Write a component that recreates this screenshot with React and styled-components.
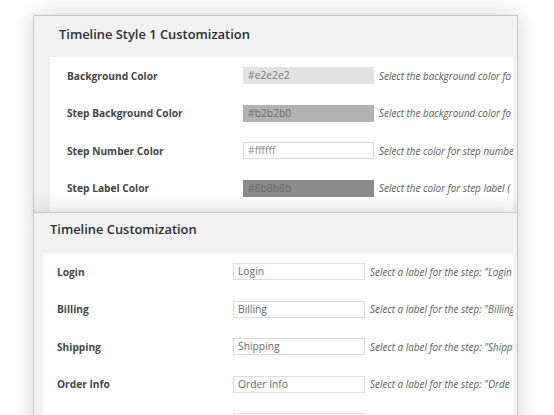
import React from 'react';
import styled, { createGlobalStyle } from 'styled-components';

const GlobalStyle = createGlobalStyle`
  html, body {
    margin: 0;
    padding: 0;
    background: #ffffff;
    overflow: hidden;
  }
  body {
    font-family: "Open Sans", "Liberation Sans", sans-serif;
  }
`;

const Page = styled.div`
  padding-top: 15px;
  height: 400px;
`;

const Panel = styled.section`
  margin-left: 33px;
  width: 483px;
  background: #f1f1f1;
  border: 1px solid #c9c9c9;
  border-bottom: ${(p) => (p.$open ? 'none' : '1px solid #c9c9c9')};
  box-shadow: 0 0 20px rgba(0, 0, 0, 0.18);
  position: relative;
`;

const Title = styled.h2`
  margin: 0;
  font-size: 12.9px;
  font-weight: 600;
  line-height: 16px;
  color: #2b2f33;
  padding: ${(p) => p.$top}px 0 ${(p) => p.$bottom}px ${(p) => p.$indent}px;
`;

const Sheet = styled.div`
  margin-left: ${(p) => p.$indent}px;
  margin-right: 4px;
  background: #ffffff;
  overflow: hidden;
  padding-bottom: ${(p) => p.$pad}px;
`;

const Row = styled.div`
  display: grid;
  grid-template-columns: ${(p) => p.$labelW}px ${(p) => p.$inputW}px 1fr;
  align-items: center;
  height: 37.5px;
  padding-left: ${(p) => p.$indent}px;
  column-gap: 5px;
`;

const Label = styled.div`
  font-size: 10.2px;
  font-weight: 700;
  color: #454545;
  white-space: nowrap;
`;

const Field = styled.div`
  height: 17px;
  box-sizing: border-box;
  border: 1px solid ${(p) => (p.$bg ? p.$bg : '#dcdcdc')};
  background: ${(p) => p.$bg || '#ffffff'};
  color: ${(p) => p.$ink || '#666'};
  font-size: 10.3px;
  line-height: 15px;
  padding-left: 4px;
  white-space: nowrap;
  overflow: hidden;
`;

const Hint = styled.div`
  font-size: 9.9px;
  font-style: italic;
  font-weight: 400;
  color: #5c5c5c;
  white-space: nowrap;
  overflow: hidden;
`;

const styleRows = [
  { label: 'Background Color', value: '#e2e2e2', bg: '#e2e2e2', ink: '#787878', hint: 'Select the background color fo' },
  { label: 'Step Background Color', value: '#b2b2b0', bg: '#b2b2b0', ink: '#6c6c6c', hint: 'Select the background color fo' },
  { label: 'Step Number Color', value: '#ffffff', bg: null, ink: '#8a8a8a', hint: 'Select the color for step numbe' },
  { label: 'Step Label Color', value: '#8b8b8b', bg: '#8b8b8b', ink: '#6a6a6a', hint: 'Select the color for step label (' },
];

const stepRows = [
  { label: 'Login', value: 'Login', hint: 'Select a label for the step: "Login' },
  { label: 'Billing', value: 'Billing', hint: 'Select a label for the step: "Billing' },
  { label: 'Shipping', value: 'Shipping', hint: 'Select a label for the step: "Shipp' },
  { label: 'Order Info', value: 'Order Info', hint: 'Select a label for the step: "Orde' },
  { label: '', value: '', hint: '' },
];

export default function App() {
  return (
    <Page>
      <GlobalStyle />
      <Panel $open>
        <Title $top={10} $bottom={15} $indent={25}>Timeline Style 1 Customization</Title>
        <Sheet $indent={16} $pad={5}>
          {styleRows.map((r) => (
            <Row key={r.label} $indent={17} $labelW={171} $inputW={131}>
              <Label>{r.label}</Label>
              <Field $bg={r.bg} $ink={r.ink}>{r.value}</Field>
              <Hint>{r.hint}</Hint>
            </Row>
          ))}
        </Sheet>
      </Panel>
      <Panel>
        <Title $top={8} $bottom={16} $indent={16}>Timeline Customization</Title>
        <Sheet $indent={9} $pad={0}>
          {stepRows.map((r, i) => (
            <Row key={i} $indent={14} $labelW={171} $inputW={132}>
              <Label>{r.label}</Label>
              <Field $ink="#6a6a6a">{r.value}</Field>
              <Hint>{r.hint}</Hint>
            </Row>
          ))}
        </Sheet>
      </Panel>
    </Page>
  );
}
